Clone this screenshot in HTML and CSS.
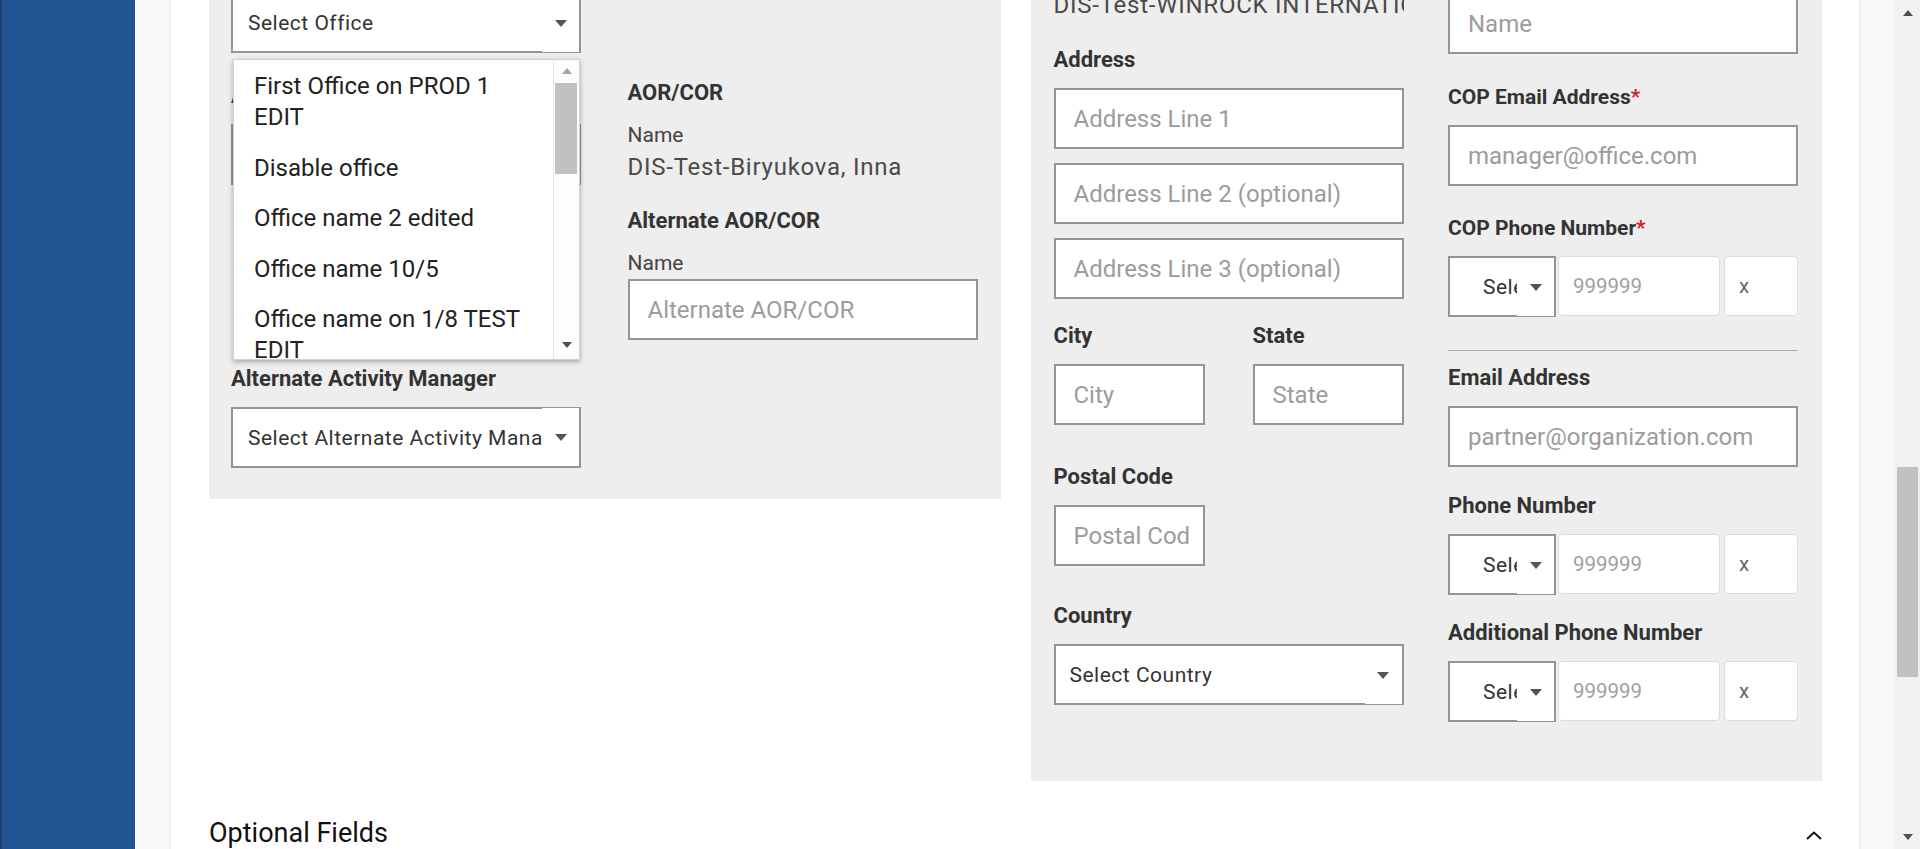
FILE: index.html
```html
<!DOCTYPE html>
<html lang="en">
<head>
<meta charset="utf-8">
<title>Activity form</title>
<link rel="stylesheet" href="styles.css">
</head>
<body>
<div class="app">
  <aside class="sidebar"></aside>
  <main class="main">
    <div class="card">
      <div class="panels">
        <section class="panel panel-left">
          <div class="col">
            <div class="office-field">
              <div class="select sel-office"><span class="sel-text">Select Office</span><span class="sel-arrow arrow-bottom"><i class="caret"></i></span></div>
              <div class="dropdown">
                <ul class="dd-list">
                  <li>First Office on PROD 1 EDIT</li>
                  <li>Disable office</li>
                  <li>Office name 2 edited</li>
                  <li>Office name 10/5</li>
                  <li>Office name on 1/8 TEST EDIT</li>
                  <li>Office name 3</li>
                </ul>
                <div class="dd-scroll">
                  <div class="dd-btn dd-btn-up"><i class="tri-up light"></i></div>
                  <div class="dd-thumb"></div>
                  <div class="dd-fill"></div>
                  <div class="dd-btn dd-btn-down"><i class="tri-down"></i></div>
                </div>
              </div>
            </div>
            <div class="label am-label">Activity Manager</div>
            <div class="select"><span class="sel-text">Select Activity Manager</span><span class="sel-arrow arrow-bottom"><i class="caret"></i></span></div>
            <div class="label alt-am-label">Alternate Activity Manager</div>
            <div class="select"><span class="sel-text">Select Alternate Activity Manager</span><span class="sel-arrow arrow-top"><i class="caret"></i></span></div>
          </div>
          <div class="col">
            <div class="label aor-label">AOR/COR</div>
            <div class="sublabel">Name</div>
            <div class="value">DIS-Test-Biryukova, Inna</div>
            <div class="label alt-aor-label">Alternate AOR/COR</div>
            <div class="sublabel sublabel-input">Name</div>
            <div class="input"><span class="ph">Alternate AOR/COR</span></div>
          </div>
        </section>

        <section class="panel panel-right">
          <div class="col">
            <div class="value value-clip">DIS-Test-WINROCK INTERNATIONAL</div>
            <div class="label address-label">Address</div>
            <div class="input"><span class="ph">Address Line 1</span></div>
            <div class="input stack"><span class="ph">Address Line 2 (optional)</span></div>
            <div class="input stack"><span class="ph">Address Line 3 (optional)</span></div>
            <div class="pair city-row">
              <div>
                <div class="label">City</div>
                <div class="input"><span class="ph">City</span></div>
              </div>
              <div>
                <div class="label">State</div>
                <div class="input"><span class="ph">State</span></div>
              </div>
            </div>
            <div class="pair postal-row">
              <div>
                <div class="label">Postal Code</div>
                <div class="input"><span class="ph">Postal Code</span></div>
              </div>
            </div>
            <div class="label country-label">Country</div>
            <div class="select sel-country"><span class="sel-text">Select Country</span><span class="sel-arrow arrow-bottom"><i class="caret"></i></span></div>
          </div>
          <div class="col">
            <div class="input name-input"><span class="ph">Name</span></div>
            <div class="label label-req cop-email-label">COP Email Address<span class="req">*</span></div>
            <div class="input"><span class="ph">manager@office.com</span></div>
            <div class="label label-req cop-phone-label">COP Phone Number<span class="req">*</span></div>
            <div class="phone">
              <div class="select sel-phone"><span class="sel-text">Select</span><span class="sel-arrow arrow-bottom"><i class="caret"></i></span></div>
              <div class="num">999999</div>
              <div class="ext">x</div>
            </div>
            <div class="divider"></div>
            <div class="label email-label">Email Address</div>
            <div class="input"><span class="ph">partner@organization.com</span></div>
            <div class="label phone-label">Phone Number</div>
            <div class="phone">
              <div class="select sel-phone"><span class="sel-text">Select</span><span class="sel-arrow arrow-bottom"><i class="caret"></i></span></div>
              <div class="num">999999</div>
              <div class="ext">x</div>
            </div>
            <div class="label add-phone-label">Additional Phone Number</div>
            <div class="phone">
              <div class="select sel-phone"><span class="sel-text">Select</span><span class="sel-arrow arrow-bottom"><i class="caret"></i></span></div>
              <div class="num">999999</div>
              <div class="ext">x</div>
            </div>
          </div>
        </section>
      </div>

      <div class="section-head">
        <h2>Optional Fields</h2>
        <svg class="chevron" width="16" height="9" viewBox="0 0 16 9" aria-hidden="true"><polyline points="1,8 8,1.5 15,8" fill="none" stroke="#111" stroke-width="2"/></svg>
      </div>
    </div>
  </main>
  <div class="vscroll">
    <div class="sb-btn"><i class="tri-up"></i></div>
    <div class="sb-track"><div class="sb-thumb"></div></div>
    <div class="sb-btn"><i class="tri-down"></i></div>
  </div>
</div>
</body>
</html>
```

FILE: styles.css
```css
* { box-sizing: border-box; }
html, body { margin: 0; height: 100%; overflow: hidden; }
body {
  font-family: Roboto, "Noto Sans", "Liberation Sans", sans-serif;
  color: #333;
  background: #f8f8f8;
}
.app { display: flex; height: 849px; }
.sidebar {
  width: 135px;
  flex: none;
  background: #205493;
  border-left: 2px solid #1a4170;
}
.main {
  flex: 1;
  min-width: 0;
  padding: 0 36px;
  background: #f8f8f8;
  overflow: hidden;
}
.card {
  background: #fff;
  margin-top: -40px;
  padding: 0 37px 0 38px;
  min-height: 1000px;
  box-shadow: 0 0 3px rgba(0, 0, 0, 0.13);
}
.panels {
  display: grid;
  grid-template-columns: 1fr 1fr;
  gap: 30px;
  align-items: start;
}
.panel {
  background: #eeeeee;
  display: grid;
  grid-template-columns: 350px 350px;
  justify-content: space-between;
  align-items: start;
}
.panel-left { padding: 0 23px 31px 22px; }
.panel-right { padding: 0 24px 59px 23px; }
.col { display: flex; flex-direction: column; min-width: 0; }

/* labels & text */
.label {
  font-weight: 700;
  font-size: 22px;
  line-height: 24px;
  color: #333;
  margin-bottom: 16px;
  white-space: nowrap;
}
.label-req { font-size: 21px; }
.req { color: #cd2026; font-weight: 700; }
.sublabel {
  font-size: 21px;
  line-height: 24px;
  color: #444;
  margin-bottom: 6px;
}
.sublabel-input { margin-bottom: 4px; }
.value {
  font-size: 24px;
  line-height: 28px;
  color: #4a4a4a;
  letter-spacing: 0.75px;
  white-space: nowrap;
}
.value-clip { overflow: hidden; margin-top: 31px; }

/* inputs */
.input {
  height: 61px;
  border: 2px solid #959595;
  background: #fff;
  padding: 0 14px 0 18px;
  display: flex;
  align-items: center;
  font-size: 24px;
  color: #9c9c9c;
}
.ph { flex: 1; min-width: 0; overflow: hidden; white-space: nowrap; }
.input.stack { margin-top: 14px; }

.select {
  position: relative;
  height: 61px;
  border: 2px solid #959595;
  background: #fff;
  padding-left: 15px;
  display: flex;
  align-items: center;
  font-size: 21px;
  letter-spacing: 0.5px;
  color: #333;
}
.sel-text { flex: 1; min-width: 0; overflow: hidden; white-space: nowrap; }
.sel-arrow {
  position: absolute;
  right: 0;
  width: 37px;
  background: #fff;
  display: flex;
  align-items: center;
  justify-content: center;
}
.arrow-bottom { top: 0; bottom: -1px; }
.arrow-top { top: -1px; bottom: 0; }
.caret {
  display: block;
  width: 0; height: 0;
  border-left: 6px solid transparent;
  border-right: 6px solid transparent;
  border-top: 7px solid #555;
}

/* left column placement */
.office-field { position: relative; margin-top: 32px; }
.am-label { margin-top: 31px; }
.alt-am-label { margin-top: 182px; }
.aor-label { margin-top: 121px; margin-bottom: 18px; }
.alt-aor-label { margin-top: 28px; margin-bottom: 18px; }

/* dropdown overlay */
.dropdown {
  position: absolute;
  top: 67px;
  left: 2px;
  width: 347px;
  height: 301px;
  background: #fff;
  border: 1px solid #d2d2d2;
  box-shadow: 0 2px 5px rgba(0, 0, 0, 0.3);
  display: flex;
  overflow: hidden;
  z-index: 5;
}
.dd-list {
  flex: 1;
  margin: 0;
  padding: 1px 0 0;
  list-style: none;
  overflow: hidden;
}
.dd-list li {
  padding: 10px 20px 9.5px;
  font-size: 24px;
  line-height: 31px;
  color: #222;
}
.dd-scroll {
  width: 26px;
  flex: none;
  border-left: 1px solid #e4e4e4;
  background: #fdfdfd;
  display: flex;
  flex-direction: column;
}
.dd-btn { display: flex; align-items: center; justify-content: center; }
.dd-btn-up { height: 22px; }
.dd-btn-down { height: 28px; }
.dd-thumb { height: 91px; margin: 1px 2px 0 1px; background: #c1c1c1; }
.dd-fill { flex: 1; }

.tri-up {
  display: block;
  width: 0; height: 0;
  border-left: 5.5px solid transparent;
  border-right: 5.5px solid transparent;
  border-bottom: 6px solid #505050;
}
.tri-up.light { border-bottom-color: #a3a3a3; }
.tri-down {
  display: block;
  width: 0; height: 0;
  border-left: 5.5px solid transparent;
  border-right: 5.5px solid transparent;
  border-top: 6px solid #505050;
}

/* right panel placement */
.address-label { margin-top: 29px; }
.pair {
  display: grid;
  grid-template-columns: 151px 151px;
  justify-content: space-between;
}
.city-row { margin-top: 25px; }
.postal-row { margin-top: 40px; }
.country-label { margin-top: 38px; }
.sel-country { padding-left: 14px; }

.name-input { margin-top: 33px; }
.cop-email-label { margin-top: 31px; }
.cop-phone-label { margin-top: 30px; }
.divider { height: 1px; background: #a8a8a8; margin-top: 33px; }
.email-label { margin-top: 15px; }
.phone-label { margin-top: 27px; }
.add-phone-label { margin-top: 26px; }

.phone { display: flex; height: 61px; align-items: flex-start; }
.sel-phone { width: 108px; flex: none; padding-left: 33px; }
.num, .ext {
  height: 60px;
  border: 1px solid #dcdcdc;
  border-radius: 4px;
  background: #fff;
  display: flex;
  align-items: center;
  padding-left: 14px;
  font-size: 20.5px;
}
.num { flex: 1; margin-left: 2px; color: #a0a0a0; }
.ext { width: 74px; flex: none; margin-left: 4px; color: #666; }

/* section head */
.section-head {
  display: flex;
  justify-content: space-between;
  align-items: center;
  margin-top: 36px;
}
.section-head h2 {
  margin: 0;
  font-size: 27px;
  line-height: 32px;
  font-weight: 400;
  color: #111;
}
.chevron { display: block; margin-top: 4px; }

/* page scrollbar */
.vscroll {
  width: 25px;
  flex: none;
  background: #f1f1f1;
  display: flex;
  flex-direction: column;
}
.sb-btn { height: 25px; display: flex; align-items: center; justify-content: center; }
.sb-track { flex: 1; }
.sb-thumb { margin: 442px 2px 0; height: 210px; background: #c1c1c1; }
```
